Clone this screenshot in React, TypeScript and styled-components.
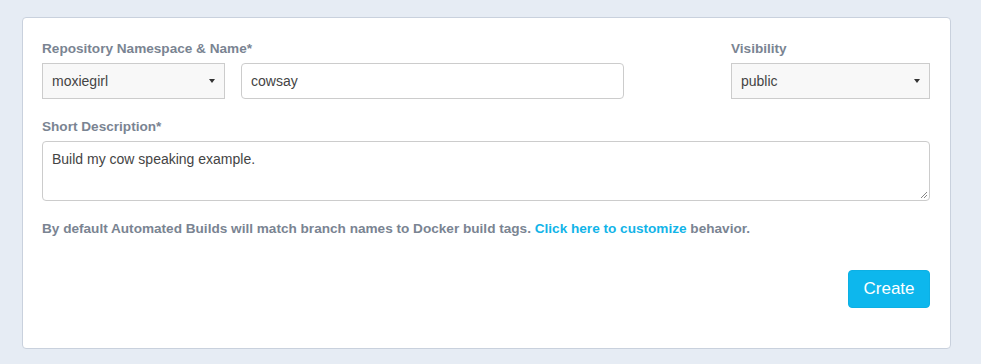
import React from 'react'
import styled, { createGlobalStyle } from 'styled-components';

const GlobalStyle = createGlobalStyle`
    html, body {
        margin: 0;
        padding: 0;
        background: #e6ecf4;
        font-family: "Liberation Sans", Arial, sans-serif;
    }
`

const Page = styled.div`
    padding: 17px 0 0 22px;
    height: 364px;
    box-sizing: border-box;
`

const Card = styled.form`
    width: 929px;
    box-sizing: border-box;
    background: #fff;
    border: 1px solid #c9d1dd;
    border-radius: 4px;
    padding: 22px 20px 40px 19px;
`

const Row = styled.div`
    display: flex;
    align-items: flex-start;
`

const Group = styled.div<{ push?: boolean }>`
    display: flex;
    flex-direction: column;
    margin-left: ${({ push }) => push ? "auto" : "0"};
`

const Fields = styled.div`
    display: flex;
    gap: 16px;
`

const Label = styled.label<{ top?: number }>`
    display: block;
    font-size: 13.6px;
    line-height: 17px;
    font-weight: bold;
    color: #7a8492;
    margin-top: ${({ top }) => top ?? 0}px;
    margin-bottom: 6px;
`

const Select = styled.div<{ w: number }>`
    width: ${({ w }) => w}px;
    height: 36px;
    box-sizing: border-box;
    border: 1px solid #cccccc;
    background: #f8f8f8;
    display: flex;
    align-items: center;
    justify-content: space-between;
    padding: 0 9px 0 9px;
    font-size: 14px;
    color: #444;
    &::after{
        content: "";
        border-left: 3.5px solid transparent;
        border-right: 3.5px solid transparent;
        border-top: 4px solid #333;
    }
`

const Input = styled.div`
    width: 383px;
    height: 36px;
    box-sizing: border-box;
    border: 1px solid #cccccc;
    border-radius: 4px;
    background: #fff;
    display: flex;
    align-items: center;
    padding: 0 9px;
    font-size: 14px;
    color: #444;
`

const TextArea = styled.div`
    position: relative;
    height: 60px;
    box-sizing: border-box;
    border: 1px solid #cccccc;
    border-radius: 4px;
    padding: 9px 9px;
    font-size: 14px;
    line-height: 17px;
    color: #444;
    svg{
        position: absolute;
        right: 1px;
        bottom: 1px;
    }
`

const Help = styled.p`
    margin: 19px 0 0;
    font-size: 13.6px;
    line-height: 17px;
    font-weight: bold;
    color: #7a8492;
    a{
        color: #12b4e8;
        text-decoration: none;
    }
`

const Actions = styled.div`
    display: flex;
    justify-content: flex-end;
    margin-top: 33px;
`

const Button = styled.button`
    width: 82px;
    height: 38px;
    background: #0db7ed;
    border: 1px solid #0cb0e4;
    border-radius: 4px;
    color: #fff;
    font-family: "Liberation Sans", Arial, sans-serif;
    font-size: 17px;
    padding: 0;
`

const App = () => {
    return (<>
        <GlobalStyle />
        <Page>
            <Card onSubmit={e => e.preventDefault()}>
                <Row>
                    <Group>
                        <Label>Repository Namespace &amp; Name*</Label>
                        <Fields>
                            <Select w={183}>moxiegirl</Select>
                            <Input>cowsay</Input>
                        </Fields>
                    </Group>
                    <Group push>
                        <Label>Visibility</Label>
                        <Select w={199}>public</Select>
                    </Group>
                </Row>
                <Label top={19}>Short Description*</Label>
                <TextArea>
                    Build my cow speaking example.
                    <svg width="8" height="8" viewBox="0 0 8 8">
                        <path d="M7 1 L1 7 M7 4 L4 7" stroke="#888" strokeWidth="1" />
                    </svg>
                </TextArea>
                <Help>
                    By default Automated Builds will match branch names to Docker build tags. <a href="#">Click here to customize</a> behavior.
                </Help>
                <Actions>
                    <Button type="submit">Create</Button>
                </Actions>
            </Card>
        </Page>
    </>
    )
}

export default App;
